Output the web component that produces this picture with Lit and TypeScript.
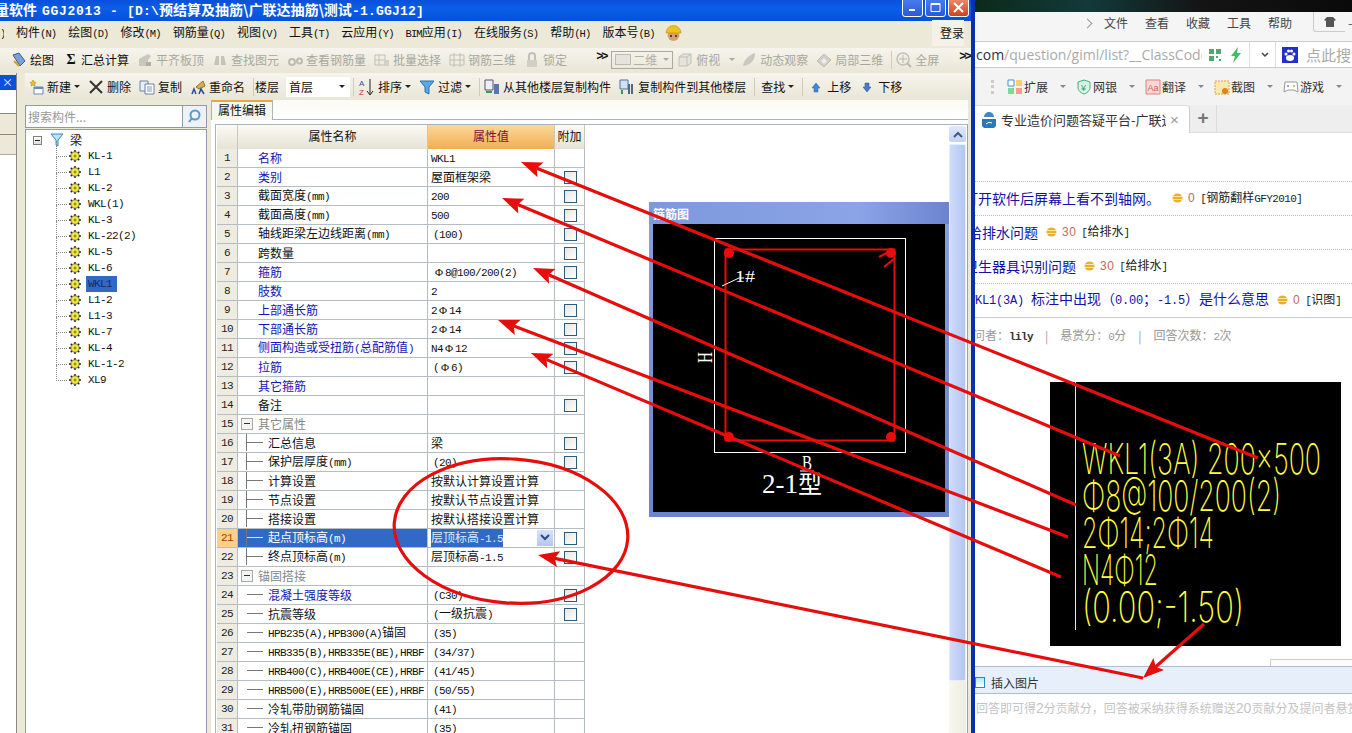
import { LitElement, html, css, svg, TemplateResult } from 'lit';
import { customElement } from 'lit/decorators.js';

// splits a string so that latin runs get the narrow half-width font
function t(s: string) {
  const parts = s.match(/[\x20-\x7e]+|Φ|[^\x20-\x7eΦ]+/g) || [];
  return parts.map((p) => {
    if (p === 'Φ') return html`<span class="rb">Φ</span>`;
    if (/^[\x20-\x7e]/.test(p)) return html`<span class="l">${p}</span>`;
    return p;
  });
}

const box = (inner: TemplateResult, w = 16) =>
  html`<svg class="ic" width=${w} height="16" viewBox="0 0 16 16">${inner}</svg>`;

const icons: Record<string, TemplateResult> = {
  draw: box(svg`<path d="M2 3l6-2 6 8-5 5z" fill="#7f9fd8" stroke="#3a5a98"/><path d="M3 9l5 5" stroke="#d8a020" stroke-width="2"/>`),
  sigma: html`<span class="sigma">Σ</span>`,
  align: box(svg`<path d="M2 14V7l9-5 3 2-3 4v6z" fill="#c8c8c0"/><path d="M9 10h5v4H9z" fill="#b0b0a8"/>`),
  binoc: box(svg`<path d="M2 13l2-9h3v9zM9 13V4h3l2 9z" fill="#c4c4bc"/>`),
  glass: box(svg`<path d="M2 10a3 3 0 0 1 6 0a3 3 0 0 1-6 0zM10 9a2.500 2.500 0 0 1 5 0a2.500 2.500 0 0 1-5 0" fill="none" stroke="#bcbcb4" stroke-width="2"/>`),
  batch: box(svg`<path d="M1 3h10v10H1zM5 3v10M1 8h10" fill="none" stroke="#c0c0b8"/><path d="M10 8h5v6h-5z" fill="#d0d0c8"/>`),
  rebar3: box(svg`<path d="M1 3h14v10H1zM5 1v14M11 1v14M1 8h14" fill="none" stroke="#c0c0b8"/>`),
  lock: box(svg`<path d="M3 8h10v7H3z" fill="#cfcfc8"/><path d="M5 8V4a3 3 0 0 1 6 0v4" fill="none" stroke="#c0c0b8" stroke-width="2"/>`),
  cube: box(svg`<path d="M2 5l4-3h8v9l-4 3H2z" fill="#e4e4dc" stroke="#c0c0b8"/><path d="M2 5h8v9M10 5l4-3" fill="none" stroke="#c0c0b8"/>`),
  orbit: box(svg`<path d="M2 14C3 7 8 3 14 1c0 7-4 12-12 13z" fill="#c8c8c0"/>`),
  local: box(svg`<path d="M1 9l7-7 7 6-7 7z" fill="#d0d0c8" stroke="#bcbcb4"/><path d="M5 9l3-3 3 3-3 3z" fill="#eee"/>`),
  full: box(svg`<circle cx="7" cy="7" r="6" fill="none" stroke="#c0c0b8" stroke-width="1.500"/><path d="M7 3v8M3 7h8" stroke="#b8b8b0"/><path d="M11 11l4 4" stroke="#b8b8b0" stroke-width="2"/>`),
  add: box(svg`<path d="M6 8h9v7H6z" fill="#fff" stroke="#6a8ab8"/><path d="M6 8h9v2H6z" fill="#6a8ab8"/><path d="M5 1l1 2 2 .500-1.500 1.500.500 2-2-1-2 1 .500-2L2 3.500 4 3z" fill="#f0c020" stroke="#a08010" stroke-width=".5"/>`),
  del: box(svg`<path d="M2 2l12 12M14 2L2 14" stroke="#333" stroke-width="2"/>`),
  copy: box(svg`<path d="M1 2h8v10H1z" fill="#e8eefa" stroke="#6a80a8"/><path d="M6 5h9v10H6z" fill="#fff" stroke="#6a80a8"/><path d="M8 8h5M8 10h5M8 12h5" stroke="#8098c0"/>`),
  rename: box(svg`<path d="M6 8l7-6 2 5-6 3z" fill="#d8b050" stroke="#907020"/><path d="M2 15l2-5 2 5M9 15l2-5 3 5" fill="none" stroke="#2a4a90" stroke-width="1.500"/>`),
  sort: html`<span class="sort"><svg width="17" height="18" viewBox="0 0 17 18"><text x="1" y="8" font-size="8" fill="#2a50b0" font-family="Liberation Sans">A</text><text x="1" y="17" font-size="8" fill="#c03030" font-family="Liberation Sans">Z</text><path d="M12 1v15M9 13l3 4 3-4" fill="none" stroke="#222"/></svg></span>`,
  funnel: box(svg`<path d="M1 2h14L10 8v7l-4-2V8z" fill="#5ca8e0" stroke="#2a70b0"/>`),
  fromfl: box(svg`<path d="M1 1h8v10H1z" fill="#eef" stroke="#556"/><path d="M10 5h5v10h-5z" fill="#5878a8"/><path d="M2 13h6" stroke="#30a040" stroke-width="2"/>`),
  tofl: box(svg`<path d="M1 1h8v9H1z" fill="#cfe0f8" stroke="#5070a0"/><path d="M10 5v10M13 5v10" stroke="#506880" stroke-width="2"/><path d="M3 15V11" stroke="#30a040" stroke-width="2"/>`),
  up: box(svg`<path d="M8 4l4 5h-2v4H6V9H4z" fill="#3d8ad8" stroke="#2060a0" stroke-width=".5"/>`),
  down: box(svg`<path d="M8 13l4-5h-2V4H6v4H4z" fill="#4a78d0" stroke="#2050a0" stroke-width=".5"/>`),
};

type Item = { i?: string; x?: string; off?: boolean; caret?: boolean; sep?: boolean; ml?: number; more?: boolean; combo?: string };

const MENU = ['构件(N)', '绘图(D)', '修改(M)', '钢筋量(Q)', '视图(V)', '工具(T)', '云应用(Y)', 'BIM应用(I)', '在线服务(S)', '帮助(H)', '版本号(B)'];

const BAR2: Item[] = [
  { i: 'draw', x: '绘图' }, { i: 'sigma', x: '汇总计算', ml: 2 },
  { i: 'align', x: '平齐板顶', off: true }, { i: 'binoc', x: '查找图元', off: true },
  { i: 'glass', x: '查看钢筋量', off: true }, { i: 'batch', x: '批量选择', off: true },
  { i: 'rebar3', x: '钢筋三维', off: true }, { i: 'lock', x: '锁定', off: true },
  { more: true, ml: 21 }, { combo: '二维' }, { i: 'cube', x: '俯视', off: true, caret: true, ml: -4 },
  { i: 'orbit', x: '动态观察', off: true, ml: -2 }, { i: 'local', x: '局部三维', off: true },
  { sep: true }, { i: 'full', x: '全屏', off: true, ml: -4 }, { more: true, ml: 12 },
];

const BAR3A: Item[] = [
  { i: 'add', x: '新建', caret: true }, { i: 'del', x: '删除' }, { i: 'copy', x: '复制' }, { i: 'rename', x: '重命名' },
];
const BAR3B: Item[] = [
  { i: 'sort', x: '排序', caret: true, ml: -4 }, { i: 'funnel', x: '过滤', caret: true }, { sep: true },
  { i: 'fromfl', x: '从其他楼层复制构件', ml: -4 }, { i: 'tofl', x: '复制构件到其他楼层' }, { sep: true },
  { x: '查找', caret: true, ml: -2 }, { sep: true }, { i: 'up', x: '上移', ml: -3 }, { i: 'down', x: '下移' },
];

const TREE = ['KL-1', 'L1', 'KL-2', 'WKL(1)', 'KL-3', 'KL-22(2)', 'KL-5', 'KL-6', 'WKL1', 'L1-2', 'L1-3', 'KL-7', 'KL-4', 'KL-1-2', 'XL9'];

type Row = { n: string; v?: string; blue?: boolean; chk?: boolean; lv?: number; group?: boolean; vert?: boolean; on?: boolean };

const ROWS: Row[] = [
  { n: '名称', v: 'WKL1', blue: true },
  { n: '类别', v: '屋面框架梁', blue: true, chk: true },
  { n: '截面宽度(mm)', v: '200', chk: true },
  { n: '截面高度(mm)', v: '500', chk: true },
  { n: '轴线距梁左边线距离(mm)', v: ' (100)', chk: true },
  { n: '跨数量', chk: true },
  { n: '箍筋', v: ' Φ8@100/200(2)', blue: true, chk: true },
  { n: '肢数', v: '2', blue: true },
  { n: '上部通长筋', v: '2Φ14', blue: true, chk: true },
  { n: '下部通长筋', v: '2Φ14', blue: true, chk: true },
  { n: '侧面构造或受扭筋(总配筋值)', v: 'N4Φ12', blue: true, chk: true },
  { n: '拉筋', v: ' (Φ6)', blue: true, chk: true },
  { n: '其它箍筋', blue: true },
  { n: '备注', chk: true },
  { n: '其它属性', group: true },
  { n: '汇总信息', v: '梁', lv: 1, vert: true, chk: true },
  { n: '保护层厚度(mm)', v: ' (20)', lv: 1, vert: true, chk: true },
  { n: '计算设置', v: '按默认计算设置计算', lv: 1, vert: true },
  { n: '节点设置', v: '按默认节点设置计算', lv: 1, vert: true },
  { n: '搭接设置', v: '按默认搭接设置计算', lv: 1, vert: true },
  { n: '起点顶标高(m)', v: '层顶标高-1.5', lv: 1, vert: true, chk: true, on: true },
  { n: '终点顶标高(m)', v: '层顶标高-1.5', lv: 1, vert: true, chk: true },
  { n: '锚固搭接', group: true },
  { n: '混凝土强度等级', v: ' (C30)', lv: 1, blue: true, chk: true },
  { n: '抗震等级', v: ' (一级抗震)', lv: 1, chk: true },
  { n: 'HPB235(A),HPB300(A)锚固', v: ' (35)', lv: 1 },
  { n: 'HRB335(B),HRB335E(BE),HRBF', v: ' (34/37)', lv: 1 },
  { n: 'HRB400(C),HRB400E(CE),HRBF', v: ' (41/45)', lv: 1 },
  { n: 'HRB500(E),HRB500E(EE),HRBF', v: ' (50/55)', lv: 1 },
  { n: '冷轧带肋钢筋锚固', v: ' (41)', lv: 1 },
  { n: '冷轧扭钢筋锚固', v: ' (35)', lv: 1 },
];

const QUESTIONS = [
  { q: '打开软件后屏幕上看不到轴网。', gap: true, score: '0', tag: '[钢筋翻样GFY2010]', off: 'o1' },
  { q: '给排水问题', score: '30', tag: '[给排水]', off: 'o2' },
  { q: '卫生器具识别问题', score: '30', tag: '[给排水]', off: 'o1' },
  { q: 'WKL1(3A) 标注中出现（0.00；-1.5）是什么意思', score: '0', tag: '[识图]', off: 'o2' },
];

const BOOKMARKS = ['扩展', '网银', '翻译', '截图', '游戏'];

function arrow(x1: number, y1: number, x2: number, y2: number, len = 21, half = 8) {
  const d = Math.hypot(x2 - x1, y2 - y1);
  const ux = (x2 - x1) / d;
  const uy = (y2 - y1) / d;
  const bx = x2 - ux * len;
  const by = y2 - uy * len;
  const nx = bx + ux * 4;
  const ny = by + uy * 4;
  const pts = [
    [x2, y2],
    [bx - uy * half, by + ux * half],
    [nx, ny],
    [bx + uy * half, by - ux * half],
  ].map((p) => p.join(',')).join(' ');
  return svg`<line x1=${x1} y1=${y1} x2=${nx} y2=${ny} /><polygon points=${pts} />`;
}

@customElement('app-root')
export class AppRoot extends LitElement {
  static styles = css`
    :host {
      display: flex;
      position: relative;
      width: 1352px;
      height: 733px;
      overflow: hidden;
      background: #fff;
      font: 12px/16px "Noto Sans CJK SC", sans-serif;
      color: #111;
    }
    svg { display: block; flex: none; }
    .l { font-family: "Liberation Mono", monospace; font-size: 11px; letter-spacing: -0.6px; }
    .rb { display: inline-block; width: 12px; text-align: center; font-size: 11px; font-family: "Liberation Serif", serif; }

    /* main window */
    .win { width: 971px; flex: none; height: 733px; background: #ece9d8; border-right: 4px solid #0a2fb0; display: flex; flex-direction: column; }
    .title { height: 21px; flex: none; display: flex; align-items: center; justify-content: space-between; background: linear-gradient(#0a4fd8, #0a5ee8 40%, #0550d8); color: #fff; font-size: 14px; font-weight: 700; white-space: nowrap; overflow: hidden; }
    .title .tt { margin-left: -5px; }
    .title .l { font-size: 13px; letter-spacing: 0.2px; font-weight: 700; }
    .title .wd { margin-left: 5px; }
    .title .wd .l { letter-spacing: 0.7px; }
    .wbtns { display: flex; gap: 2px; margin-right: 2px; align-self: flex-start; margin-top: -3px; }
    .wbtn { width: 21px; height: 20px; border-radius: 3px; border: 1px solid #fff; box-sizing: border-box; background: linear-gradient(#4a80f0, #2a58d8); display: flex; align-items: center; justify-content: center; }
    .wbtn.x { background: linear-gradient(#f09070, #d04020); }

    .menu { height: 27px; flex: none; display: flex; align-items: center; gap: 12px; background: #ece9d8; white-space: nowrap; box-sizing: border-box; padding-bottom: 3px; }
    .menu .l { font-size: 10.5px; letter-spacing: -0.9px; }
    .menu .stub { width: 4px; overflow: hidden; }
    .menu .login { margin-left: auto; margin-right: 7px; background: #f4f2e8; padding: 5px 0 5px 8px; }
    .hat { margin-left: -2px; }

    .bar { display: flex; align-items: center; gap: 8px; white-space: nowrap; box-sizing: border-box; }
    .bar2 { height: 25px; flex: none; padding: 0 0 2px 11px; background: linear-gradient(#f6f4ec, #e9e6d6); }
    .bar3 { height: 27px; flex: none; padding-left: 3px; background: linear-gradient(#f6f4ec, #e9e6d6); }
    .it { display: flex; align-items: center; gap: 3px; }
    .it.off { color: #a8a8a0; }
    .ic { flex: none; }
    .sigma { width: 14px; font: 700 14px "Liberation Serif", serif; text-align: center; }
    .sort { width: 17px; display: block; }
    .caret { width: 0; height: 0; border: 3px solid transparent; border-top: 3px solid #222; border-bottom: 0; }
    .off .caret { border-top-color: #aaa; margin-left: 6px; }
    .sep { width: 1px; height: 18px; background: #cfccb8; }
    .more { font: 700 12px "Liberation Mono", monospace; color: #111; margin-top: -6px; width: 8px; letter-spacing: -2px; }
    .combo { width: 62px; height: 18px; box-sizing: border-box; border: 1px solid #aaa99c; color: #b0b0a8; display: flex; align-items: center; gap: 2px; padding-left: 3px; margin-left: -1px; }
    .combo i { width: 14px; height: 9px; background: #e4e4dc; border: 1px solid #bbb; }
    .combo .caret { border-top-color: #aaa; margin-left: 4px; }
    .floor { width: 64px; height: 20px; background: #fff; display: flex; align-items: center; justify-content: space-between; padding: 0 5px 0 3px; box-sizing: border-box; margin-left: -1px; margin-right: -5px; }
    .floorlbl { margin-left: -7px; }

    .mainrow { flex: 1; display: flex; min-height: 0; }
    .dock { width: 16px; flex: none; margin-right: 8px; display: flex; flex-direction: column; border-right: 1px solid #8a8a80; box-sizing: content-box; }
    .dockhead { margin-top: 2px; height: 15px; background: #0a50d8; color: #fff; font-size: 11px; line-height: 15px; text-align: right; padding-right: 3px; }
    .dockpad { height: 23px; background: #fff; }
    .dockbtn { height: 22px; border-top: 1px solid #888; border-bottom: 1px solid #888; box-sizing: border-box; background: #ece9d8; }
    .dockbtn2 { height: 20px; background: #ece9d8; border-bottom: 1px solid #aaa; box-sizing: border-box; }
    .dockrest { flex: 1; background: #fff; }

    .center { flex: 1; display: flex; flex-direction: column; min-width: 0; }
    .body { flex: 1; display: flex; gap: 4px; min-height: 0; }
    .treecol { width: 182px; flex: none; }
    .search { margin-top: 5px; height: 23px; display: flex; border: 1px solid #8c9cab; box-sizing: border-box; align-items: center; justify-content: space-between; color: #999; padding-left: 2px; background: linear-gradient(90deg, #fff 156px, #8c9cab 156px, #8c9cab 157px, #eef2f6 157px); }
    .tree { height: 620px; margin-top: 1px; background: #fff; border: 1px solid #8c9cab; box-sizing: border-box; padding-top: 2px; }
    .node { height: 16px; display: flex; align-items: center; }
    .root { padding-left: 7px; gap: 8px; }
    .root svg { margin-right: -2px; }
    .minus { width: 9px; height: 9px; border: 1px solid #808080; box-sizing: border-box; background: linear-gradient(#fff, #ddd); display: flex; align-items: center; justify-content: center; }
    .minus::after { content: ""; width: 5px; height: 1px; background: #222; }
    .leaf { padding-left: 30px; gap: 2px; }
    .leaf .dots { position: relative; width: 11px; border-top: 1px dotted #888; }
    .leaf .dots::before { content: ""; position: absolute; left: 0; top: -16px; height: 16px; border-left: 1px dotted #888; }
    .leaf .lbl { padding: 0 1px; height: 16px; margin-left: 4px; display: flex; align-items: center; min-width: 0; }
    .leaf .sel { background: #316ac5; color: #1a2a60; margin-left: 3px; padding: 0 5px 0 2px; }

    .panel { flex: 1; margin-right: 3px; background: #fff; display: flex; flex-direction: column; min-width: 0; }
    .tabs { height: 19px; flex: none; background: linear-gradient(#fbfaf4, #fff); border-bottom: 1px solid #a9b4bd; display: flex; }
    .tab { width: 62px; box-sizing: border-box; background: #f6f6ee; border-top: 2px solid #e8a840; border-right: 1px solid #a9b4bd; border-left: 1px solid #a9b4bd; padding-left: 6px; line-height: 15px; height: 20px; }
    .gridwrap { flex: 1; margin: 4px 0 0 4px; border: 1px solid #a9b4bd; border-bottom: 0; border-right: 1px solid #9aa2a8; display: flex; min-height: 0; }
    .grid { flex: 1; overflow: hidden; padding-left: 1px; }
    .gr { display: grid; grid-template-columns: 21px 190px 127px 30px; width: 368px; height: 19px; }
    .gr > div { border-right: 1px solid #b4bcc4; border-bottom: 1px solid #b4bcc4; box-sizing: border-box; display: flex; align-items: center; white-space: nowrap; overflow: hidden; }
    .gh { height: 24px; }
    .gh > div { justify-content: center; border: 0; border-right: 1px solid #c8c8bc; background: linear-gradient(#fbfaf4, #e6e3d4); padding-bottom: 2px; }
    .gh .hv { background: linear-gradient(#fbd999, #efae52); color: #7c0c3c; }
    .num { justify-content: center; background: #eeece0; color: #222; }
    .num .l { font-size: 11px; }
    .num.hot { background: #fcd08a; color: #a04000; }
    .nm { padding: 0 0 1px 20px; }
    .nm.lv1 { padding-left: 9px; }
    .nm.grp { padding-left: 3px; color: #888; gap: 5px; }
    .nm.blue { color: #1414b4; }
    .nm.on { background: #316ac5; color: #fff; }
    .nm.on .branch { background: #dfe8f8; }
    .nm .gbox { width: 12px; height: 12px; border: 1px solid #aaa; box-sizing: border-box; display: flex; align-items: center; justify-content: center; background: #f4f4f0; }
    .nm .gbox::after { content: ""; width: 6px; height: 1px; background: #333; }
    .branch { position: relative; width: 16px; height: 1px; background: #777; margin-right: 5px; flex: none; }
    .branch.v::before { content: ""; position: absolute; left: -1px; top: -10px; width: 1px; height: 19px; background: #777; }
    .val { padding: 0 0 1px 3px; justify-content: space-between; }
    .val.ind { padding-left: 5px; }
    .val .hl { background: #316ac5; color: #dfe8ff; }
    .dd { width: 16px; height: 16px; margin-right: 1px; background: linear-gradient(#d8e2f8, #b4c6ee); display: flex; align-items: center; justify-content: center; flex: none; }
    .add { justify-content: center; }
    .chk { width: 13px; height: 13px; box-sizing: border-box; border: 1px solid #2f5a78; background: linear-gradient(135deg, #e6e6e0, #fff); margin-left: 1px; }
    .sb { width: 17px; flex: none; display: flex; flex-direction: column; margin-right: 1px; }
    .sbup { height: 16px; margin: 1px 0 2px; background: linear-gradient(#e0e8fc, #c4d2f4); border-radius: 2px; display: flex; align-items: center; justify-content: center; }
    .sbthumb { height: 537px; background: linear-gradient(90deg, #d0dcf8, #c0d0f8 50%, #b4c6f0); border: 1px solid #e4ecff; border-radius: 2px; box-sizing: border-box; }
    .sbtrack { flex: 1; background: linear-gradient(90deg, #f8f8f0, #ecece0); }

    /* floating stirrup window */
    .dlg { position: absolute; left: 649px; top: 202px; width: 300px; height: 315px; box-sizing: border-box; background: linear-gradient(#8aa0e0, #6a84d0); padding: 0 4px 5px; display: flex; flex-direction: column; }
    .dlg .cap { height: 22px; flex: none; color: #fff; font-size: 12px; font-weight: 700; line-height: 23px; background: linear-gradient(90deg, #7e98dc, #8ba4e8 70%, #6c84cc); margin: 0 -4px; padding-left: 4px; }
    .dlg .cad { flex: 1; background: #000; }

    /* browser */
    .br { flex: 1; min-width: 0; height: 733px; display: flex; flex-direction: column; overflow: hidden; background: #fff; }
    .wall { height: 12px; flex: none; background: linear-gradient(90deg, #0b2a1a, #123a3a 30%, #141414 60%, #0a0a0a); }
    .bmenu { height: 30px; flex: none; display: flex; align-items: flex-start; padding: 3px 0 0 118px; background: #f5f5f5; border-bottom: 1px solid #ccc; box-sizing: border-box; gap: 17px; color: #444; white-space: nowrap; overflow: hidden; }
    .bmenu > span { flex: none; }
    .bmenu .chev { width: 6px; height: 6px; border-top: 1px solid #999; border-right: 1px solid #999; transform: rotate(45deg); margin: 5px -4px 0 -9px; }
    .shirt { width: 32px; height: 20px; margin: -3px 0 0 4px; border-left: 1px solid #ccc; border-bottom: 1px solid #ccc; box-sizing: border-box; display: flex; align-items: center; justify-content: center; border-bottom-left-radius: 3px; }
    .dash { margin-left: -14px; }
    .baddr { height: 26px; flex: none; display: flex; align-items: center; background: #fff; border-bottom: 1px solid #ccc; box-sizing: border-box; white-space: nowrap; font: 15px "Open Sans", sans-serif; }
    .url { width: 226px; overflow: hidden; padding-left: 1px; color: #aaa; flex: none; font-size: 14px; }
    .url b { font-weight: 400; color: #333; }
    .vbar { width: 1px; height: 25px; background: #ddd; flex: none; }
    .srch { color: #aaa; font: 15px "Noto Sans CJK SC", sans-serif; margin-left: 8px; }
    .bbook { height: 37px; flex: none; display: flex; align-items: center; background: #f3f3f3; padding-left: 16px; white-space: nowrap; color: #333; }
    .grip { width: 3px; height: 14px; border-left: 3px dotted #ccc; margin-right: 13px; box-sizing: border-box; }
    .bk { display: flex; align-items: center; gap: 1px; width: 70px; }
    .bk .caret { border-top-color: #888; margin-left: 11px; border-width: 3.500px; border-bottom: 0; }
    .btabs { height: 28px; flex: none; background: #eee; display: flex; box-sizing: border-box; border-bottom: 1px solid #ddd; }
    .btab { width: 215px; height: 28px; box-sizing: border-box; background: #fff; border-right: 1px solid #ccc; border-top: 1px solid #ddd; border-top-right-radius: 4px; display: flex; align-items: center; padding-left: 6px; gap: 4px; overflow: hidden; white-space: nowrap; color: #333; flex: none; }
    .btab .ttl { width: 165px; overflow: hidden; flex: none; font-size: 13px; }
    .btab .cl { color: #999; font: 15px "Liberation Sans", sans-serif; }
    .plus { width: 26px; border-right: 1px solid #ddd; text-align: center; color: #777; font: 700 19px/25px "Liberation Sans", sans-serif; }

    .qlist { padding-top: 48px; flex: none; }
    .q { height: 34px; border-top: 1px dotted #bbb; box-sizing: border-box; display: flex; align-items: center; white-space: nowrap; gap: 5px; }
    .q .qin { display: flex; align-items: center; gap: 5px; margin-bottom: 1px; }
    .q.o1 .qin { margin-left: -11px; }
    .q.o2 .qin { margin-left: -7px; }
    .q .tx { color: #1212a8; font-size: 14px; margin: 0 3px 1px 0; }
    .q .tx .l { font-size: 12px; letter-spacing: -0.2px; }
    .q .gapper { margin-right: 7px; }
    .q .sc { color: #c06a60; font: 12px "Liberation Sans", sans-serif; letter-spacing: 0.5px; }
    .q .tag { color: #222; }
    .meta { height: 36px; border-top: 1px solid #ccc; box-sizing: border-box; display: flex; align-items: center; color: #999; white-space: nowrap; gap: 12px; flex: none; overflow: hidden; }
    .meta > span:first-child { margin-left: -14px; }
    .meta .who { color: #333; font-weight: 700; }
    .shot { margin: 29px 0 0 75px; width: 291px; height: 264px; background: #000; flex: none; }
    .strip { height: 20px; flex: none; display: flex; align-items: flex-end; justify-content: flex-end; }
    .strip i { width: 82px; height: 7px; border: 1px solid #dccfae; border-bottom: 0; box-sizing: border-box; border-right: 0; }
    .ins { height: 28px; flex: none; background: #e6effa; border-top: 1px solid #a9bfd8; border-bottom: 1px solid #a9bfd8; box-sizing: border-box; display: flex; align-items: center; gap: 6px; color: #333; padding-top: 5px; }
    .ins i { width: 8px; height: 9px; background: linear-gradient(#ace8ff, #fff); border: 1px solid #2a88c0; }
    .hint { color: #c4c4c4; white-space: nowrap; padding: 6px 0 0 1px; }
    .hint .l { font: 14px "Liberation Sans", sans-serif; letter-spacing: 0; }

    .marks { position: absolute; left: 0; top: 0; pointer-events: none; }
    .marks line, .marks ellipse { stroke: #e60d0d; stroke-width: 3.2; fill: none; }
    .marks polygon { fill: #e60d0d; }
  `;

  renderItem(it: Item) {
    const st = it.ml ? `margin-left:${it.ml}px` : '';
    if (it.sep) return html`<span class="sep"></span>`;
    if (it.more) return html`<span class="more" style=${st}>&gt;&gt;</span>`;
    if (it.combo) return html`<span class="combo"><i></i>${it.combo}<span class="caret"></span></span>`;
    return html`<span class="it ${it.off ? 'off' : ''}" style=${st}>
      ${it.i ? icons[it.i] : ''}<span>${it.x}</span>${it.caret ? html`<span class="caret"></span>` : ''}
    </span>`;
  }

  gear() {
    const dots = Array.from({ length: 8 }, (_, i) => {
      const a = (i * Math.PI) / 4;
      return svg`<circle cx=${6 + Math.cos(a) * 5} cy=${6 + Math.sin(a) * 5} r="1" fill="#222" />`;
    });
    return html`<svg width="12" height="12" viewBox="0 0 12 12">${dots}<circle cx="6" cy="6" r="4.200" fill="#f0ea40" stroke="#333" stroke-width=".6" /><circle cx="6" cy="6" r="1.500" fill="#a09020" /></svg>`;
  }

  coin() {
    return html`<svg width="11" height="10" viewBox="0 0 11 10"><ellipse cx="5.500" cy="5" rx="5" ry="4.500" fill="#e8b030" /><path d="M1 3.500h9M1 6.500h9" stroke="#fbe8a0" /></svg>`;
  }

  renderRow(r: Row, i: number) {
    const cls = ['nm'];
    if (r.group) cls.push('grp');
    if (r.lv) cls.push('lv1');
    if (r.blue) cls.push('blue');
    if (r.on) cls.push('on');
    const raw = r.v || '';
    return html`<div class="gr">
      <div class="num ${r.on ? 'hot' : ''}">${t(String(i + 1))}</div>
      <div class=${cls.join(' ')}>
        ${r.group ? html`<span class="gbox"></span>` : ''}
        ${r.lv ? html`<span class="branch ${r.vert ? 'v' : ''}"></span>` : ''}
        <span>${t(r.n)}</span>
      </div>
      <div class="val ${raw.startsWith(' ') ? 'ind' : ''}">
        ${r.on
          ? html`<span class="hl">${t(raw)}</span><span class="dd"><svg width="10" height="7" viewBox="0 0 10 7"><path d="M1 1l4 4 4-4" fill="none" stroke="#2a4a88" stroke-width="2" /></svg></span>`
          : html`<span>${t(raw.trim())}</span>`}
      </div>
      <div class="add">${r.chk ? html`<span class="chk"></span>` : ''}</div>
    </div>`;
  }

  stirrupSvg() {
    return html`<svg width="291" height="288" viewBox="0 0 291 288">
      <rect x="61.500" y="14.500" width="191" height="214" fill="none" stroke="#fff" />
      <rect x="72.500" y="25.500" width="169" height="191" fill="none" stroke="#e60d0d" stroke-width="2" />
      <g fill="#e60d0d">
        <circle cx="76" cy="29" r="5" /><circle cx="238" cy="29" r="5" />
        <circle cx="76" cy="213" r="5" /><circle cx="238" cy="213" r="5" />
      </g>
      <path d="M226 33l13-7M231 43l11-9" stroke="#e60d0d" stroke-width="2" />
      <path d="M69 62l17-8h5" stroke="#fff" fill="none" />
      <text x="82" y="58" fill="#fff" font-size="16" textLength="20" lengthAdjust="spacingAndGlyphs" font-family="Liberation Serif">1#</text>
      <text fill="#fff" font-size="20" textLength="11" lengthAdjust="spacingAndGlyphs" font-family="Liberation Serif" transform="translate(59 139) rotate(-90)">H</text>
      <text x="149" y="246" fill="#fff" font-size="20" textLength="10" lengthAdjust="spacingAndGlyphs" font-family="Liberation Serif">B</text>
      <path d="M147 247h14" stroke="#fff" />
      <text x="109" y="269" fill="#fff" font-size="27" font-family="Liberation Serif">2-1<tspan font-size="24" font-family="Noto Sans CJK SC">型</tspan></text>
    </svg>`;
  }

  cadSvg() {
    const lines: [string, number, number][] = [
      ['WKL1(3A) 200x500', 92, 239],
      ['Φ8@100/200(2)', 129, 199],
      ['2Φ14;2Φ14', 166, 132],
      ['N4Φ12', 203, 76],
      ['(0.00;-1.50)', 240, 162],
    ];
    return html`<svg width="291" height="264" viewBox="0 0 291 264">
      <line x1="25.500" y1="0" x2="25.500" y2="248" stroke="#ffff40" />
      ${lines.map(
        ([s, y, w]) => svg`<text x="32" y=${y} textLength=${w} lengthAdjust="spacingAndGlyphs" fill="#ffff40"
          font-size="42" font-weight="150" font-family="Inter, Liberation Sans, sans-serif">${s}</text>`,
      )}
    </svg>`;
  }

  render() {
    return html`
      <div class="win">
        <div class="title">
          <span class="tt">量软件<span class="wd">${t('GGJ2013 - ')}</span>${t(' [D:\\')}预结算及抽筋\\广联达抽筋\\测试${t('-1.GGJ12]')}</span>
          <span class="wbtns">
            <span class="wbtn"><svg width="9" height="9" viewBox="0 0 9 9"><path d="M1 6h6v2H1z" fill="#fff" /></svg></span>
            <span class="wbtn"><svg width="11" height="11" viewBox="0 0 11 11"><path d="M1 1.500h9v8H1z" fill="none" stroke="#fff" /><path d="M1 1h9v2H1z" fill="#fff" /></svg></span>
            <span class="wbtn x"><svg width="11" height="11" viewBox="0 0 11 11"><path d="M1 1l9 9M10 1l-9 9" stroke="#fff" stroke-width="2" /></svg></span>
          </span>
        </div>
        <div class="menu">
          <span class="stub">${t(')')}</span>
          ${MENU.map((m) => html`<span>${t(m)}</span>`)}
          <svg class="hat" width="17" height="17" viewBox="0 0 17 17"><circle cx="8.500" cy="10" r="6" fill="#d8a070" /><path d="M1 8a7.500 7.500 0 0 1 15 0z" fill="#f0c020" stroke="#b08010" stroke-width=".5" /><circle cx="6" cy="11" r="1" fill="#222" /><circle cx="11" cy="11" r="1" fill="#222" /></svg>
          <span class="login">登录</span>
        </div>
        <div class="bar bar2">${BAR2.map((i) => this.renderItem(i))}</div>
        <div class="mainrow">
          <div class="dock">
            <div class="dockhead">×</div>
            <div class="dockpad"></div>
            <div class="dockbtn"></div>
            <div class="dockbtn2"></div>
            <div class="dockrest"></div>
          </div>
          <div class="center">
            <div class="bar bar3">
              ${BAR3A.map((i) => this.renderItem(i))}
              <span class="sep"></span>
              <span class="floorlbl">楼层</span>
              <span class="floor"><span>首层</span><span class="caret"></span></span>
              <span class="sep"></span>
              ${BAR3B.map((i) => this.renderItem(i))}
            </div>
            <div class="body">
              <div class="treecol">
                <div class="search">
                  <span>搜索构件...</span>
                  <svg width="18" height="18" viewBox="0 0 18 18" style="margin-right:3px"><circle cx="10" cy="7" r="4.500" fill="none" stroke="#5a9ac8" stroke-width="2" /><path d="M7 10l-3 4" stroke="#5a9ac8" stroke-width="2" /></svg>
                </div>
                <div class="tree">
                  <div class="node root">
                    <span class="minus"></span>
                    <svg width="14" height="14" viewBox="0 0 14 14"><path d="M1 1h12L8 7v6l-2-1V7z" fill="#bfe0f4" stroke="#3a8ab8" /></svg>
                    <span>梁</span>
                  </div>
                  ${TREE.map(
                    (n) => html`<div class="node leaf">
                      <span class="dots"></span>${this.gear()}
                      <span class="lbl ${n === 'WKL1' ? 'sel' : ''}">${t(n)}</span>
                    </div>`,
                  )}
                </div>
              </div>
              <div class="panel">
                <div class="tabs"><div class="tab">属性编辑</div></div>
                <div class="gridwrap">
                  <div class="grid">
                    <div class="gr gh">
                      <div></div><div>属性名称</div><div class="hv">属性值</div><div>附加</div>
                    </div>
                    ${ROWS.map((r, i) => this.renderRow(r, i))}
                  </div>
                  <div class="sb">
                    <div class="sbup"><svg width="10" height="7" viewBox="0 0 10 7"><path d="M1 6l4-4 4 4" fill="none" stroke="#3a5a90" stroke-width="2" /></svg></div>
                    <div class="sbthumb"></div>
                    <div class="sbtrack"></div>
                  </div>
                </div>
              </div>
            </div>
          </div>
        </div>
      </div>

      <div class="br">
        <div class="wall"></div>
        <div class="bmenu">
          <span class="chev"></span>
          ${['文件', '查看', '收藏', '工具', '帮助'].map((m) => html`<span>${m}</span>`)}
          <span class="shirt"><svg width="12" height="10" viewBox="0 0 12 10"><path d="M3 0h6l3 3-2 1v6H2V4L0 3z" fill="#555" /></svg></span>
          <span class="dash">—</span>
        </div>
        <div class="baddr">
          <span class="url"><b>com</b>/question/giml/list?__ClassCode</span>
          <svg width="14" height="14" viewBox="0 0 14 14" style="margin:0 8px 0 6px"><path d="M1 1h5v5H1zM8 1h5v5H8zM1 8h5v5H1zM8 8h2v2H8zM11 11h2v2h-2z" fill="#4caa70" /></svg>
          <svg width="12" height="16" viewBox="0 0 12 16"><path d="M8 0L1 9h4l-2 7 8-10H7z" fill="#3cc060" /></svg>
          <span class="vbar" style="margin-left:7px"></span>
          <svg width="8" height="6" viewBox="0 0 8 6" style="margin:0 6px 0 11px"><path d="M1 1l3 3 3-3" fill="none" stroke="#444" stroke-width="1.500" /></svg>
          <span class="vbar"></span>
          <svg width="16" height="16" viewBox="0 0 16 16" style="margin-left:6px"><path d="M0 0h16v16H0z" fill="#2030c8" /><ellipse cx="8" cy="11" rx="4" ry="3" fill="#fff" /><circle cx="4" cy="7" r="1.500" fill="#fff" /><circle cx="12" cy="7" r="1.500" fill="#fff" /><circle cx="6.500" cy="4" r="1.500" fill="#fff" /><circle cx="9.500" cy="4" r="1.500" fill="#fff" /></svg>
          <span class="srch">点此搜索</span>
        </div>
        <div class="bbook">
          <span class="grip"></span>
          ${BOOKMARKS.map(
            (b, i) => html`<span class="bk">
              <svg width="16" height="16" viewBox="0 0 16 16">
                ${[
                  svg`<path d="M1 1h6v6H1z" fill="#fff" stroke="#4a90d0"/><path d="M9 1h6v6H9z" fill="#f8d060"/><path d="M1 9h6v6H1z" fill="#80d890"/><path d="M9 9h6v6H9z" fill="#f4a090"/>`,
                  svg`<path d="M8 1l6 2v5c0 4-3 6-6 7-3-1-6-3-6-7V3z" fill="#d8f4e4" stroke="#40b080"/><text x="5" y="12" font-size="9" fill="#30a070" font-family="Liberation Sans">¥</text>`,
                  svg`<path d="M1 1h14v14H1z" fill="#fbd8d4" stroke="#e08080"/><text x="2.500" y="11.500" font-size="9" fill="#d06060" font-family="Liberation Sans">Aa</text>`,
                  svg`<path d="M1 2h14v13H1z" fill="#fbeab0" stroke="#e0a040" stroke-dasharray="2 1"/><circle cx="11" cy="12" r="3" fill="#e08020"/>`,
                  svg`<path d="M2 3h12l1 10-4-2H5l-4 2z" fill="#fff" stroke="#999"/><circle cx="5" cy="7" r="1" fill="#888"/><circle cx="11" cy="7" r="1" fill="#e0a040"/>`,
                ][i]}
              </svg>
              <span>${b}</span><span class="caret"></span>
            </span>`,
          )}
        </div>
        <div class="btabs">
          <div class="btab">
            <svg width="16" height="18" viewBox="0 0 16 18"><path d="M3 6a5 5 0 0 1 10 0z" fill="#3a8ac8" /><path d="M1 8h14v7l-2 2H3l-2-2z" fill="#2a78b8" /><path d="M5 13q3-3 6-1" stroke="#fff" fill="none" /></svg>
            <span class="ttl">专业造价问题答疑平台-广联达服务</span>
            <span class="cl">×</span>
          </div>
          <div class="plus">+</div>
        </div>
        <div class="qlist">
          ${QUESTIONS.map(
            (q) => html`<div class="q ${q.off}"><span class="qin">
              <span class="tx ${q.gap ? 'gapper' : ''}">${t(q.q)}</span>
              ${this.coin()}
              <span class="sc">${q.score}</span>
              <span class="tag">${t(q.tag)}</span>
            </span></div>`,
          )}
        </div>
        <div class="meta">
          <span>提问者：<span class="who">${t('lily')}</span></span><span>|</span><span>悬赏分：${t('0')}分</span><span>|</span><span>回答次数：${t('2')}次</span>
        </div>
        <div class="shot">${this.cadSvg()}</div>
        <div class="strip"><i></i></div>
        <div class="ins"><i></i>插入图片</div>
        <div class="hint">回答即可得${t('2')}分贡献分，回答被采纳获得系统赠送${t('20')}贡献分及提问者悬赏分</div>
      </div>

      <div class="dlg">
        <div class="cap">箍筋图</div>
        <div class="cad">${this.stirrupSvg()}</div>
      </div>

      <svg class="marks" width="1352" height="733" viewBox="0 0 1352 733">
        ${arrow(1258, 458, 521, 162)}
        ${arrow(1120, 456, 502, 198)}
        ${arrow(1076, 505, 533, 268)}
        ${arrow(1068, 537, 498, 320)}
        ${arrow(1061, 577, 531, 353)}
        ${arrow(1143, 678, 538, 555)}
        ${arrow(1204, 624, 1143, 678)}
        <ellipse cx="511" cy="531" rx="117" ry="72" transform="rotate(4 511 531)" />
      </svg>
    `;
  }
}
